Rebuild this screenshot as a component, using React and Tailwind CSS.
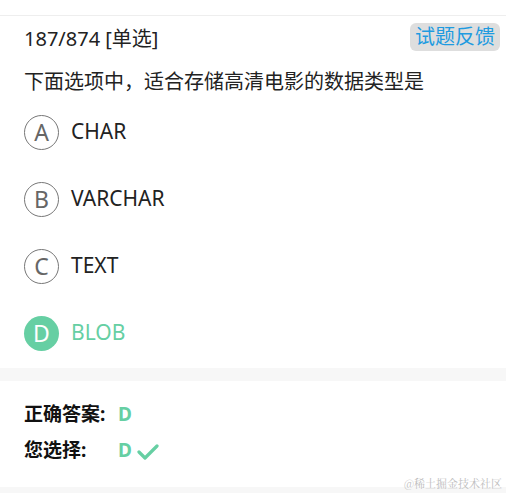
import React from 'react';

const options = [
  { key: 'A', text: 'CHAR' },
  { key: 'B', text: 'VARCHAR' },
  { key: 'C', text: 'TEXT' },
  { key: 'D', text: 'BLOB', picked: true },
];

const App = () => {
  return (
    <div className="relative w-[506px] h-[493px] bg-white overflow-hidden font-['Noto_Sans','Noto_Sans_CJK_SC',sans-serif] text-[#222]">
      <div className="h-4 border-b border-[#eeeeee]" />

      <div className="flex items-start justify-between pl-6 pr-[6px] pt-[7px]">
        <div className="text-[20px] leading-[28px] pt-[2px] text-[#222]">187/874 [单选]</div>
        <button className="bg-[#dedede] rounded-md px-[5px] h-[28px] text-[20px] leading-[28px] text-[#1e9be0]">
          试题反馈
        </button>
      </div>

      <div className="px-6 mt-[15px] text-[20px] leading-[28px] text-[#222]">
        下面选项中，适合存储高清电影的数据类型是
      </div>

      <div className="flex flex-col gap-[31px] px-6 mt-[18px]">
        {options.map((o) => (
          <div key={o.key} className="flex items-center gap-[12px] h-[36px]">
            {o.picked ? (
              <div className="w-[35px] h-[35px] rounded-full bg-[#66cfa3] text-white flex items-center justify-center text-[23px]">
                {o.key}
              </div>
            ) : (
              <div className="w-[35px] h-[35px] rounded-full border border-[#777] text-[#666] flex items-center justify-center text-[23px]">
                {o.key}
              </div>
            )}
            <span className={`text-[21px] ${o.picked ? 'text-[#66cfa3]' : 'text-[#222]'}`}>{o.text}</span>
          </div>
        ))}
      </div>

      <div className="h-[13px] bg-[#f7f7f7] mt-[17px]" />

      <div className="h-[106px] px-6 pt-[20px]">
        <div className="flex items-center h-[26px] font-bold text-[19px] text-[#111]">
          <span className="w-[94px]">正确答案:</span>
          <span className="text-[#66cfa3] text-[19px]">D</span>
        </div>
        <div className="flex items-center h-[26px] mt-[10px] font-bold text-[19px] text-[#111]">
          <span className="w-[94px]">您选择:</span>
          <span className="text-[#66cfa3] text-[19px]">D</span>
          <svg width="22" height="18" viewBox="0 0 22 18" className="ml-[5px] mt-[4px]">
            <path d="M2 9 L8 15 L20 3" fill="none" stroke="#66cfa3" strokeWidth="3.2" strokeLinecap="round" strokeLinejoin="round" />
          </svg>
        </div>
      </div>

      <div className="h-[8px] bg-[#f7f7f7]" />

      <div className="absolute right-[4px] bottom-[3px] text-[11px] leading-[14px] text-[#bdbdbd] font-['Noto_Serif_CJK_SC','Liberation_Serif',serif]">
        @稀土掘金技术社区
      </div>
    </div>
  );
};

export default App;
